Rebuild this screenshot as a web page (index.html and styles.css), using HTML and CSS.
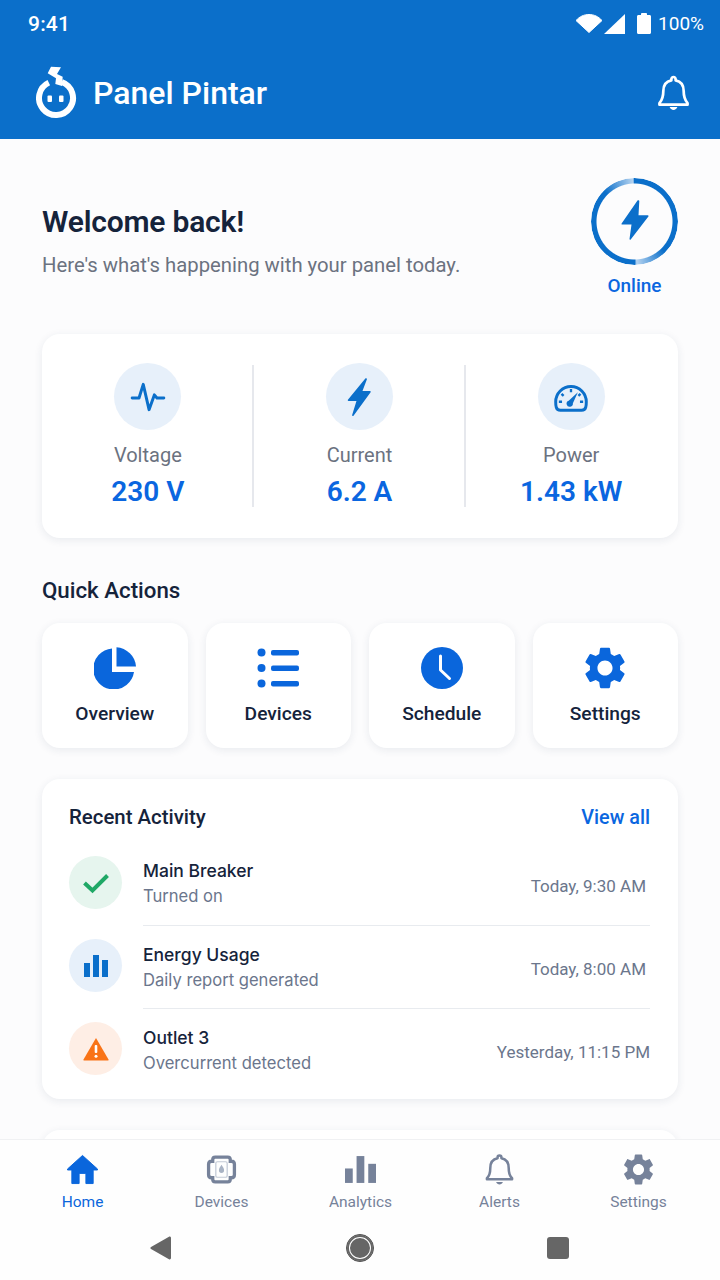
FILE: index.html
```html
<!DOCTYPE html>
<html lang="en">
<head>
<meta charset="utf-8">
<title>Panel Pintar</title>
<link rel="stylesheet" href="styles.css">
</head>
<body>
<div class="app">
  <header class="header">
    <div class="status">
      <span class="time">9:41</span>
      <div class="status-icons">
        <svg class="i-wifi" viewBox="0 0 26 19"><path d="M0 6.500C3.500 2.600 8 .5 13 .5s9.500 2.100 13 6L13 18.500z" fill="#fff" stroke="#fff" stroke-linejoin="round"/></svg>
        <svg class="i-signal" viewBox="0 0 21 20"><path d="M21 0v20H0z" fill="#fff"/></svg>
        <svg class="i-batt" viewBox="0 0 14 21"><path d="M4 2V1.200C4 .5 4.500 0 5 0h4c.6 0 1 .5 1 1.200V2h2.500c.9 0 1.500.6 1.500 1.500V19.500c0 .9-.6 1.500-1.500 1.500h-11C.6 21 0 20.400 0 19.500V3.500C0 2.600.6 2 1.500 2z" fill="#fff"/></svg>
        <span class="batt-text">100%</span>
      </div>
    </div>
    <div class="brand-row">
      <div class="brand">
        <svg class="logo" viewBox="0 0 41 53">
          <path d="M12.800 16.600A17 17 0 1 0 25.800 16" fill="none" stroke="#fff" stroke-width="6"/>
          <path d="M15 .7 25 1.300 21 8l5.700 2.700L26 20l-6.700-2 .7-5.700-8.300-5z" fill="#fff"/>
          <rect x="11.500" y="29.500" width="4.500" height="6.500" rx="1" fill="#fff"/>
          <rect x="23" y="29.500" width="4.500" height="6.500" rx="1" fill="#fff"/>
        </svg>
        <span class="brand-name">Panel Pintar</span>
      </div>
      <svg class="bell" viewBox="0 0 32 36"><path d="M16 1.500a2.200 2.200 0 0 1 2.200 2.200v1.200C24 6 26.500 10.500 26.500 16c0 6 .8 9 4 12.500v1.500h-29v-1.500c3.200-3.500 4-6.500 4-12.500 0-5.500 2.500-10 8.300-11.100V3.700A2.200 2.200 0 0 1 16 1.500z" fill="none" stroke="#fff" stroke-width="2.800" stroke-linejoin="round"/><path d="M12 32.500h8c-.6 1.800-2.200 3-4 3s-3.400-1.200-4-3z" fill="#fff"/></svg>
    </div>
  </header>

  <main class="main">
    <section class="hero">
      <div class="hero-text">
        <h1 class="hero-title">Welcome back!</h1>
        <p class="hero-sub">Here's what's happening with your panel today.</p>
      </div>
      <div class="hero-status">
        <div class="ring">
          <svg class="ring-bolt" viewBox="0 0 28 40"><path d="M16.500.6 .6 23.500c-.3.500 0 1 .6 1h9.300L8.500 38.900c-.1.900.7 1.200 1.200.6L27.400 16.500c.4-.6 0-1.200-.7-1.200h-9.200l.8-14.200c.1-.8-1.300-1-1.800-.5z" fill="#0b6fca"/></svg>
        </div>
        <span class="online">Online</span>
      </div>
    </section>

    <section class="card stats">
      <div class="stat">
        <div class="stat-icon">
          <svg class="stat-svg" viewBox="0 0 36 36"><path d="M3 19h6.500l4-13 5.500 24 5-14 2.500 3H33" fill="none" stroke="#0b6fca" stroke-width="2.800" stroke-linejoin="round" stroke-linecap="round"/></svg>
        </div>
        <span class="stat-label">Voltage</span>
        <span class="stat-value">230 V</span>
      </div>
      <div class="stat">
        <div class="stat-icon">
          <svg class="stat-svg" viewBox="0 0 36 36"><path d="M24 .5 7.500 20.500c-.4.600 0 1.200.6 1.200h7.500L11.500 35c-.2 1 .8 1.300 1.300.7L29 13.500c.4-.6 0-1.200-.7-1.200h-7L25.500 1.200c.2-1-.9-1.300-1.500-.7z" fill="#0b6fca"/></svg>
        </div>
        <span class="stat-label">Current</span>
        <span class="stat-value">6.2 A</span>
      </div>
      <div class="stat">
        <div class="stat-icon">
          <svg class="stat-svg" viewBox="0 0 36 36"><path d="M8 30.500h20c2 0 3.500-1 4-3 .5-1.500.5-3.500.5-5a14.500 14.500 0 0 0-29 0c0 1.500 0 3.500.5 5 .5 2 2 3 4 3z" fill="none" stroke="#0b6fca" stroke-width="2.800"/><path d="M24.500 13.500 19.800 24a3 3 0 1 1-4-2.500z" fill="#0b6fca"/><path d="M18 10.500v3M9 15l2 2M27 15l-2 2M6.500 22.500h3M26.500 22.500h3" stroke="#0b6fca" stroke-width="2.200" fill="none"/></svg>
        </div>
        <span class="stat-label">Power</span>
        <span class="stat-value">1.43 kW</span>
      </div>
    </section>

    <h2 class="section-title">Quick Actions</h2>
    <section class="actions">
      <div class="action">
        <svg class="action-icon" viewBox="0 0 42 42"><path d="M18 3v22h22A20.500 20.500 0 1 1 18 1.500z" fill="#0a66dc"/><path d="M22.500 .3C32.500.8 41.500 9.500 42 19.500H22.500z" fill="#0a66dc"/></svg>
        <span class="action-label">Overview</span>
      </div>
      <div class="action">
        <svg class="action-icon" viewBox="0 0 42 42"><g fill="#0a66dc"><circle cx="4.500" cy="5.500" r="4"/><circle cx="4.500" cy="21" r="4"/><circle cx="4.500" cy="36.500" r="4"/><rect x="14" y="3" width="28" height="5.500" rx="2"/><rect x="14" y="18.500" width="28" height="5.500" rx="2"/><rect x="14" y="34" width="28" height="5.500" rx="2"/></g></svg>
        <span class="action-label">Devices</span>
      </div>
      <div class="action">
        <svg class="action-icon" viewBox="0 0 42 42"><circle cx="21" cy="21" r="21" fill="#0a66dc"/><path d="M19.500 9v14l9 8.500" fill="none" stroke="#fff" stroke-width="3" stroke-linecap="round" stroke-linejoin="round"/></svg>
        <span class="action-label">Schedule</span>
      </div>
      <div class="action">
        <svg class="action-icon" viewBox="2.300 2 19.400 20"><path d="M19.140 12.940c.04-.3.06-.61.06-.94 0-.32-.02-.64-.07-.94l2.030-1.580c.18-.14.23-.41.12-.61l-1.920-3.320c-.12-.22-.37-.29-.59-.22l-2.390.96c-.5-.38-1.030-.7-1.620-.94l-.36-2.540c-.04-.24-.24-.41-.48-.41h-3.840c-.24 0-.43.17-.47.41l-.36 2.540c-.59.24-1.130.57-1.620.94l-2.390-.96c-.22-.08-.47 0-.59.22L2.740 8.870c-.12.21-.08.47.12.61l2.030 1.580c-.05.3-.09.63-.09.94s.02.64.07.94l-2.030 1.580c-.18.14-.23.41-.12.61l1.920 3.320c.12.22.37.29.59.22l2.390-.96c.5.38 1.030.7 1.620.94l.36 2.540c.05.24.24.41.48.41h3.840c.24 0 .44-.17.47-.41l.36-2.540c.59-.24 1.130-.56 1.620-.94l2.390.96c.22.08.47 0 .59-.22l1.920-3.320c.12-.22.07-.47-.12-.61l-2.010-1.580zM12 15.600c-1.980 0-3.600-1.620-3.600-3.600s1.620-3.600 3.600-3.600 3.600 1.620 3.600 3.600-1.620 3.600-3.600 3.600z" fill="#0a66dc"/></svg>
        <span class="action-label">Settings</span>
      </div>
    </section>

    <section class="card activity">
      <div class="activity-head">
        <h2 class="activity-title">Recent Activity</h2>
        <span class="view-all">View all</span>
      </div>
      <div class="row">
        <div class="row-icon tint-green"><svg class="row-svg" viewBox="0 0 26 20"><path d="M1.500 10 9.500 17.500 24.500 2.500" fill="none" stroke="#1fa866" stroke-width="4"/></svg></div>
        <div class="row-body">
          <div class="row-text"><span class="row-title">Main Breaker</span><span class="row-sub">Turned on</span></div>
          <span class="row-time inset">Today, 9:30 AM</span>
        </div>
      </div>
      <div class="row">
        <div class="row-icon tint-blue"><svg class="row-svg" viewBox="0 0 26 24"><g fill="#0b6fca"><rect x="1" y="9" width="6" height="14"/><rect x="10" y="1" width="6" height="22"/><rect x="19" y="6" width="6" height="17"/></g></svg></div>
        <div class="row-body">
          <div class="row-text"><span class="row-title">Energy Usage</span><span class="row-sub">Daily report generated</span></div>
          <span class="row-time inset">Today, 8:00 AM</span>
        </div>
      </div>
      <div class="row">
        <div class="row-icon tint-orange"><svg class="row-svg" viewBox="0 0 26 24"><path d="M13 1 25.500 22.500a.6.600 0 0 1-.5.900H1a.6.600 0 0 1-.5-.9z" fill="#f97316"/><rect x="11.700" y="8" width="2.600" height="8" rx="1" fill="#fff"/><circle cx="13" cy="19.300" r="1.500" fill="#fff"/></svg></div>
        <div class="row-body">
          <div class="row-text"><span class="row-title">Outlet 3</span><span class="row-sub">Overcurrent detected</span></div>
          <span class="row-time">Yesterday, 11:15 PM</span>
        </div>
      </div>
    </section>
    <section class="card peek"></section>
  </main>

  <footer class="footer">
    <nav class="tabs">
      <div class="tab active">
        <svg class="tab-icon" viewBox="0 0 32 30"><path d="M16 .5 31.500 14.500v1H27V29.500H19.500V19h-7V29.500H5V15.500H.5v-1z" fill="#0a66dc" stroke="#0a66dc" stroke-linejoin="round"/></svg>
        <span class="tab-label">Home</span>
      </div>
      <div class="tab">
        <svg class="tab-icon" viewBox="0 0 30 30"><path d="M9 3h12c1.500 0 2.500 1 2.500 2.500V7h1c2 0 3 1 3 3v10c0 2-1 3-3 3h-1v1.500c0 1.500-1 2.500-2.500 2.500H9c-1.500 0-2.500-1-2.500-2.500V23h-1c-2 0-3-1-3-3V10c0-2 1-3 3-3h1V5.500C6.500 4 7.500 3 9 3z" fill="none" stroke="#76829a" stroke-width="3.200"/><rect x="9.500" y="7.500" width="11" height="15" rx="1.500" fill="none" stroke="#c3cad6" stroke-width="1.200"/><path d="M15 10.500c1.600 2.500 2.500 3.500 2.500 5.300a2.500 2.500 0 0 1-5 0c0-1.800.9-2.800 2.500-5.300z" fill="#a9b3c4"/></svg>
        <span class="tab-label">Devices</span>
      </div>
      <div class="tab">
        <svg class="tab-icon" viewBox="0 0 30 30"><g fill="#76829a"><rect x="0" y="14" width="7.500" height="14"/><rect x="11.200" y="2" width="7.500" height="26"/><rect x="22.500" y="9.500" width="7.500" height="18.500"/></g></svg>
        <span class="tab-label">Analytics</span>
      </div>
      <div class="tab">
        <svg class="tab-icon" viewBox="0 0 30 32"><path d="M15 1.500a2 2 0 0 1 2 2v1c5 1 7.500 5 7.500 10 0 5.500.8 8 3.500 10.500v1H2v-1c2.700-2.500 3.500-5 3.500-10.500 0-5 2.500-9 7.500-10v-1a2 2 0 0 1 2-2z" fill="none" stroke="#76829a" stroke-width="2.600" stroke-linejoin="round"/><path d="M11.500 29h7c-.5 1.500-2 2.500-3.500 2.500s-3-1-3.500-2.500z" fill="#76829a"/></svg>
        <span class="tab-label">Alerts</span>
      </div>
      <div class="tab">
        <svg class="tab-icon" viewBox="2.300 2 19.400 20"><path d="M19.140 12.940c.04-.3.06-.61.06-.94 0-.32-.02-.64-.07-.94l2.030-1.580c.18-.14.23-.41.12-.61l-1.920-3.320c-.12-.22-.37-.29-.59-.22l-2.390.96c-.5-.38-1.030-.7-1.620-.94l-.36-2.540c-.04-.24-.24-.41-.48-.41h-3.840c-.24 0-.43.17-.47.41l-.36 2.540c-.59.24-1.130.57-1.620.94l-2.390-.96c-.22-.08-.47 0-.59.22L2.740 8.870c-.12.21-.08.47.12.61l2.030 1.580c-.05.3-.09.63-.09.94s.02.64.07.94l-2.030 1.580c-.18.14-.23.41-.12.61l1.920 3.320c.12.22.37.29.59.22l2.390-.96c.5.38 1.030.7 1.620.94l.36 2.540c.05.24.24.41.48.41h3.840c.24 0 .44-.17.47-.41l.36-2.540c.59-.24 1.130-.56 1.620-.94l2.390.96c.22.08.47 0 .59-.22l1.920-3.320c.12-.22.07-.47-.12-.61l-2.010-1.580zM12 15.600c-1.980 0-3.600-1.620-3.600-3.600s1.620-3.600 3.600-3.600 3.600 1.620 3.600 3.600-1.620 3.600-3.600 3.600z" fill="#76829a"/></svg>
        <span class="tab-label">Settings</span>
      </div>
    </nav>
    <div class="sysnav">
      <svg class="sys-back" viewBox="0 0 21 24"><path d="M19 .8 1 11c-.8.500-.8 1.500 0 2l18 10.200c.9.500 2-.1 2-1.200V2c0-1.100-1.100-1.700-2-1.200z" fill="#666"/></svg>
      <div class="sys-home"></div>
      <div class="sys-recent"></div>
    </div>
  </footer>
</div>
</body>
</html>
```
FILE: styles.css
```css
* { box-sizing: border-box; }
html, body { margin: 0; padding: 0; }
body { font-family: Roboto, "Noto Sans", sans-serif; background: #fcfcfd; color: #15233b; }
h1, h2, p { margin: 0; }
.app { width: 720px; height: 1280px; display: flex; flex-direction: column; overflow: hidden; position: relative; }

.header { height: 139px; flex: none; background: #0b6fca; color: #fff; padding: 0 16px 0 28px; }
.status { height: 47px; display: flex; align-items: center; justify-content: space-between; }
.time { font-size: 21px; font-weight: 500; letter-spacing: .2px; }
.status-icons { display: flex; align-items: center; }
.i-wifi { width: 26px; height: 19px; margin-right: 2px; }
.i-signal { width: 21px; height: 20px; margin-right: 12px; }
.i-batt { width: 14px; height: 21px; margin-right: 7px; }
.batt-text { font-size: 19px; }
.brand-row { display: flex; align-items: center; justify-content: space-between; padding: 19px 15px 0 8px; }
.brand { display: flex; align-items: center; gap: 17px; }
.logo { width: 41px; height: 53px; margin-right: -1px; }
.brand-name { font-size: 32px; font-weight: 500; }
.bell { width: 31px; height: 36px; }

.main { flex: 1; min-height: 0; padding: 0 42px; overflow: hidden; }
.hero { display: flex; justify-content: space-between; padding-top: 39px; height: 195px; }
.hero-text { padding-top: 26px; }
.hero-title { font-size: 30px; font-weight: 600; line-height: 36px; letter-spacing: -.2px; }
.hero-sub { font-size: 20.300px; line-height: 28px; color: #6b7280; margin-top: 11px; }
.hero-status { display: flex; flex-direction: column; align-items: center; width: 87px; }
.ring { width: 87px; height: 87px; border-radius: 50%; display: flex; align-items: center; justify-content: center; position: relative; padding-bottom: 3px; }
.ring::before { content: ""; position: absolute; inset: 0; border-radius: 50%;
  background: conic-gradient(#0b6fca 0 135deg, #b5d3f0 177deg, #0b6fca 180deg 315deg, #b5d3f0 358deg, #0b6fca 360deg);
  -webkit-mask: radial-gradient(closest-side, transparent calc(100% - 6px), #000 calc(100% - 5px));
  mask: radial-gradient(closest-side, transparent calc(100% - 6px), #000 calc(100% - 5px)); }
.ring-bolt { width: 28px; height: 40px; }
.online { font-size: 19px; font-weight: 500; color: #0a66e0; margin-top: 9px; line-height: 24px; }

.card { background: #fff; border-radius: 18px; box-shadow: 0 2px 9px rgba(30, 50, 90, .09); }
.stats { height: 204px; display: grid; grid-template-columns: repeat(3, 1fr); padding: 29px 1px 31px 0; }
.stat { display: flex; flex-direction: column; align-items: center; position: relative; }
.stat + .stat::before { content: ""; position: absolute; left: -1.500px; top: 2px; bottom: 2px; width: 2px; background: #e6e8ed; }
.stat-icon { width: 67px; height: 67px; border-radius: 50%; background: #e7f0fa; display: flex; align-items: center; justify-content: center; }
.stat-svg { width: 38px; height: 38px; }
.stat-label { font-size: 20px; line-height: 26px; color: #6b7280; margin-top: 12px; }
.stat-value { font-size: 28px; font-weight: 600; line-height: 34px; color: #0a66e0; margin-top: 7px; }

.section-title { font-size: 22.300px; font-weight: 500; line-height: 28px; margin-top: 38px; }
.actions { display: grid; grid-template-columns: repeat(4, 1fr); gap: 18px; margin-top: 19px; }
.action { height: 125px; background: #fff; border-radius: 18px; box-shadow: 0 2px 9px rgba(30, 50, 90, .09); display: flex; flex-direction: column; align-items: center; padding-top: 24px; }
.action-icon { width: 42px; height: 42px; }
.action-label { font-size: 19.200px; font-weight: 500; line-height: 24px; margin-top: 13px; }

.activity { margin-top: 31px; height: 320px; padding: 24px 28px 0 27px; }
.activity-head { display: flex; justify-content: space-between; align-items: center; height: 28px; margin-bottom: 11px; }
.activity-title { font-size: 20.400px; font-weight: 500; }
.view-all { font-size: 19.800px; font-weight: 500; color: #0a66e0; }
.row { display: flex; align-items: center; gap: 21px; height: 83px; }
.row-icon { width: 53px; height: 53px; border-radius: 50%; flex: none; display: flex; align-items: center; justify-content: center; margin-top: -2px; }
.tint-green { background: #e6f5ee; }
.tint-blue { background: #e7f0fa; }
.tint-orange { background: #feeee5; }
.row-svg { width: 26px; height: 24px; }
.row-body { flex: 1; height: 100%; display: flex; align-items: center; justify-content: space-between; }
.row + .row .row-body { border-top: 1px solid #e8ebef; }
.row-text { display: flex; flex-direction: column; font-family: Inter, Roboto, sans-serif; }
.row-title { font-size: 17.500px; font-weight: 500; line-height: 26px; }
.row-sub { font-size: 16.600px; line-height: 25px; color: #6b768c; }
.row-time { font-size: 17px; color: #6b768c; padding-top: 4px; }
.inset { padding-right: 4px; }
.peek { margin-top: 31px; height: 60px; }

.footer { position: absolute; left: 0; right: 0; bottom: 0; height: 141px; background: #fefefe; border-top: 1px solid #f0f1f3; }
.tabs { display: grid; grid-template-columns: repeat(5, 1fr); padding: 14px 12px 0 13px; }
.tab { display: flex; flex-direction: column; align-items: center; }
.tab-icon { width: 31px; height: 31px; }
.tab-label { font-size: 15.500px; line-height: 20px; margin-top: 7px; color: #76829a; }
.active .tab-label { color: #0a66dc; }
.sysnav { display: flex; align-items: center; padding: 22px 0 0 150px; gap: 175px; }
.sys-back { width: 21px; height: 24px; }
.sys-home { width: 28px; height: 28px; border-radius: 50%; background: #666; box-shadow: inset 0 0 0 2px #666, inset 0 0 0 3px #fff; border: 1.500px solid #555; }
.sys-recent { width: 22px; height: 22px; border-radius: 3px; background: #666; margin-left: -2px; }
```
